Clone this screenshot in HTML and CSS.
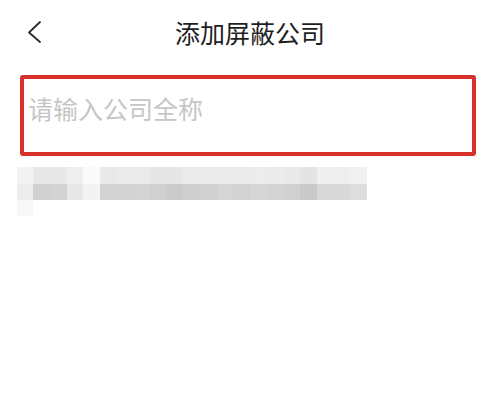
FILE: index.html
```html
<!DOCTYPE html>
<html lang="zh">
<head>
<meta charset="utf-8">
<link rel="stylesheet" href="styles.css">
</head>
<body>
<div class="page">
  <header class="nav">
    <div class="nav-left">
      <svg class="back" width="16" height="24" viewBox="0 0 16 24">
        <path d="M13 2 L2 12.5 L13 22" fill="none" stroke="#2b2b2b" stroke-width="1.8" stroke-linecap="round" stroke-linejoin="round"/>
      </svg>
    </div>
    <h1 class="title">添加屏蔽公司</h1>
    <div class="nav-right"></div>
  </header>

  <div class="search-box">
    <span class="placeholder">请输入公司全称</span>
  </div>

  <div class="blur">
    <div class="row top">
      <i class="c f3"></i><i class="c e8"></i><i class="c e8"></i><i class="c ef"></i><i class="c fa"></i><i class="c e9"></i><i class="c eb"></i><i class="c eb"></i><i class="c e6"></i><i class="c e6"></i><i class="c eb"></i><i class="c eb"></i><i class="c eb"></i><i class="c eb"></i><i class="c ec"></i><i class="c eb"></i><i class="c e9"></i><i class="c e4"></i><i class="c ef"></i><i class="c ee"></i><i class="c f0"></i>
    </div>
    <div class="row bottom">
      <i class="c ec"></i><i class="c d1"></i><i class="c d3"></i><i class="c e8"></i><i class="c f3"></i><i class="c d3"></i><i class="c d3"></i><i class="c d4"></i><i class="c d0"></i><i class="c cb"></i><i class="c cf"></i><i class="c d0"></i><i class="c d6"></i><i class="c d3"></i><i class="c d6"></i><i class="c d4"></i><i class="c d0"></i><i class="c ca"></i><i class="c d8"></i><i class="c d8"></i><i class="c dd"></i>
    </div>
    <div class="row tail">
      <i class="c f8"></i>
    </div>
  </div>
</div>
</body>
</html>
```
FILE: styles.css
```css
html, body {
  margin: 0;
  padding: 0;
  background: #ffffff;
}

body {
  width: 500px;
  height: 400px;
  overflow: hidden;
  font-family: "Noto Sans CJK SC", "Noto Sans", sans-serif;
}

.page {
  display: flex;
  flex-direction: column;
}

.nav {
  height: 63px;
  display: grid;
  grid-template-columns: 1fr auto 1fr;
  align-items: center;
}

.nav-left {
  display: flex;
  align-items: center;
  padding-left: 27px;
}

.back {
  display: block;
}

.title {
  margin: 0;
  font-size: 25px;
  font-weight: 400;
  line-height: 30px;
  color: #1e1e1e;
  letter-spacing: 0;
}

.search-box {
  margin: 12px 24px 0 20px;
  height: 73px;
  border: 4px solid #d7302b;
  border-radius: 3px;
  padding: 14px 0 0 4px;
  box-sizing: content-box;
}

.search-box {
  height: 59px;
}

.placeholder {
  display: block;
  font-size: 25px;
  line-height: 30px;
  color: #c6c6c6;
}

.blur {
  margin: 11px 0 0 16.5px;
  display: flex;
  flex-direction: column;
}

.row {
  display: flex;
}

.row.top,
.row.bottom {
  height: 16.5px;
}

.row.tail {
  height: 16px;
}

.c {
  display: block;
  width: 16.7px;
  height: 100%;
}

.f3 { background: #f3f3f3; }
.e8 { background: #e8e8e8; }
.ef { background: #efefef; }
.fa { background: #fafafa; }
.e9 { background: #e9e9e9; }
.eb { background: #ebebeb; }
.e6 { background: #e6e6e6; }
.ec { background: #ececec; }
.e4 { background: #e4e4e4; }
.ee { background: #eeeeee; }
.f0 { background: #f0f0f0; }
.d1 { background: #d1d1d1; }
.d3 { background: #d3d3d3; }
.d4 { background: #d4d4d4; }
.d0 { background: #d0d0d0; }
.cb { background: #cbcbcb; }
.cf { background: #cfcfcf; }
.d6 { background: #d6d6d6; }
.ca { background: #cacaca; }
.d8 { background: #d8d8d8; }
.dd { background: #dddddd; }
.f8 { background: #f8f8f8; }
```
